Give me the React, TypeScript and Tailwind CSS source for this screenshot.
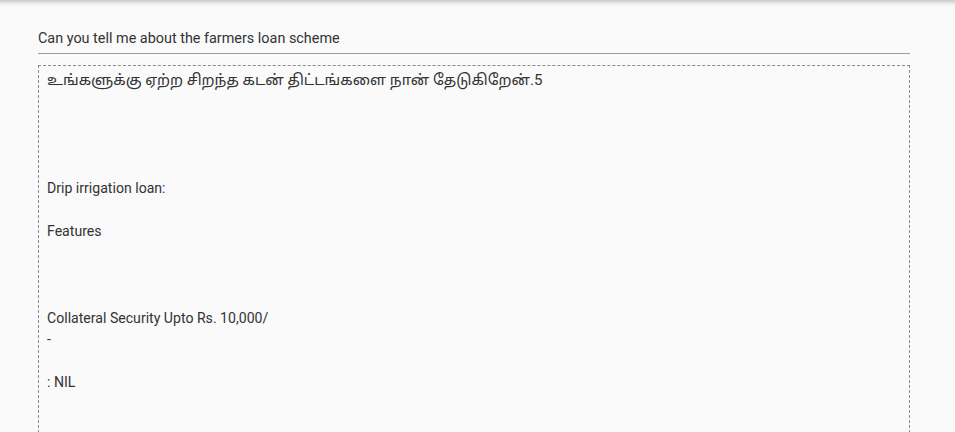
import React from "react";

export default function App() {
  const lines = [
    "உங்களுக்கு ஏற்ற சிறந்த கடன் திட்டங்களை நான் தேடுகிறேன்.5",
    "",
    "",
    "",
    "",
    "Drip irrigation loan:",
    "",
    "Features",
    "",
    "",
    "",
    "Collateral Security Upto Rs. 10,000/",
    "-",
    "",
    ": NIL",
    "",
    "",
  ];
  return (
    <div
      className="min-h-[432px] h-[432px] overflow-hidden bg-[#fafafa] text-[#333333]"
      style={{ fontFamily: "Roboto, 'Noto Sans', 'Noto Sans Tamil', sans-serif" }}
    >
      <div className="h-[7px] bg-gradient-to-b from-[#c8c8c8] via-[#ececec] to-[#fafafa]" />
      <div className="pl-[38px] pt-[23px]">
        <div className="w-[872px]">
          <div className="text-[14.4px] leading-[18px] pb-[5px] border-b border-[#9e9e9e]">
            Can you tell me about the farmers loan scheme
          </div>
          <div className="mt-[11px] border border-dashed border-[#8a8a8a] px-[8px] pt-[4px] text-[14.1px] leading-[21.6px]">
            {lines.map((l, i) => (
              <div key={i} className={i === 0 ? "text-[15px]" : ""}>
                {l === "" ? "\u00a0" : l}
              </div>
            ))}
          </div>
        </div>
      </div>
    </div>
  );
}
